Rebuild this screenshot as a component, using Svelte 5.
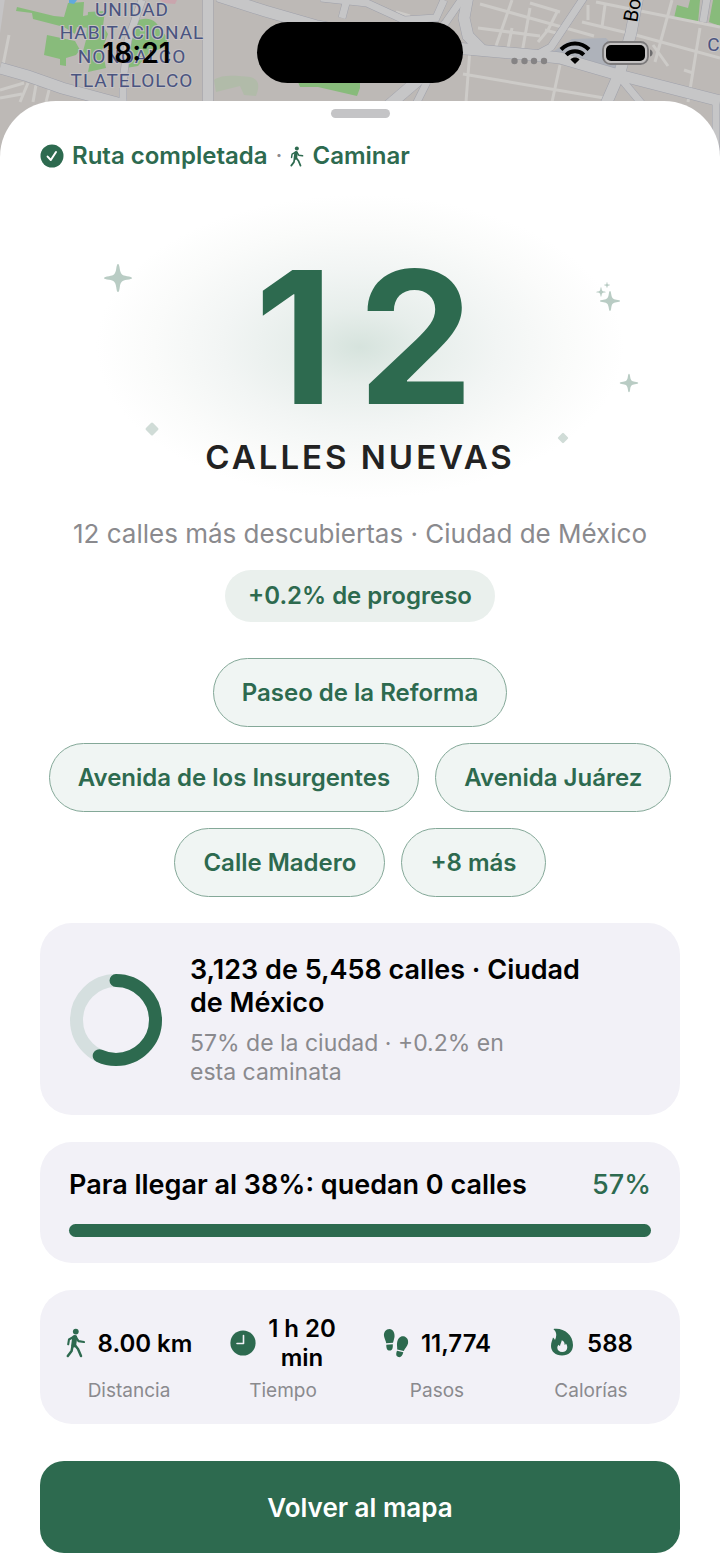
<script lang="ts">
	const streets = ['Paseo de la Reforma', 'Avenida de los Insurgentes', 'Avenida Juárez', 'Calle Madero'];
	const moreStreets = 8;

	const cityPercent = 57;
	const goalProgress = 100;

	const stats = [
		{ icon: 'walk', value: '8.00\u00a0km', label: 'Distancia' },
		{ icon: 'clock', value: '1\u00a0h\u00a020 min', label: 'Tiempo' },
		{ icon: 'steps', value: '11,774', label: 'Pasos' },
		{ icon: 'flame', value: '588', label: 'Calorías' }
	];

	const mainRoads = [
		'M0 68L28 76L62 88L125 105',
		'M218 -4L265 11L317 26L400 42L466 49L532 55L560 58L615 74L720 101',
		'M468 -4L464 18L468 36L482 50',
		'M638 -4L631 33L620 72L606 104',
		'M430 70L388 106'
	];

	const sideRoads = [
		'M123 105V82L128 40L142 0',
		'M321 -2L367 3L404 20L436 18L444 0',
		'M346 3L342 18',
		'M464 -4L446 22L430 40',
		'M585 -4L551 47L534 56',
		'M427 82L416 104',
		'M622 80L642 104',
		'M707 -2L703 22',
		'M716 95V170'
	];

	const star = 'M0 -14C1 -14 1.4 -12 1.8 -9C2.6 -4 4 -2.6 9 -1.8C12 -1.4 14 -1 14 0C14 1 12 1.4 9 1.8C4 2.6 2.6 4 1.8 9C1.4 12 1 14 0 14C-1 14 -1.4 12 -1.8 9C-2.6 4 -4 2.6 -9 1.8C-12 1.4 -14 1 -14 0C-14 -1 -12 -1.4 -9 -1.8C-4 -2.6 -2.6 -4 -1.8 -9C-1.4 -12 -1 -14 0 -14Z';
</script>

{#snippet walkIcon()}
	<svg class="walk" viewBox="0 0 20 30" aria-hidden="true">
		<circle cx="9.8" cy="3.6" r="2.9" fill="currentColor" />
		<g fill="none" stroke="currentColor" stroke-linecap="round" stroke-linejoin="round">
			<path d="M8.7 9.5L7.7 17" stroke-width="5" />
			<path d="M7.4 9L3 11.5L2.2 16.3" stroke-width="2.1" />
			<path d="M10 9.2L12.5 13.1L18 14" stroke-width="2.1" />
			<path d="M9 17.2L12 21L15 28" stroke-width="2.5" />
			<path d="M6.5 18L5.6 23L1.8 28" stroke-width="2.5" />
		</g>
	</svg>
{/snippet}

<main class="screen">
	<header class="map">
		<svg class="map-art" viewBox="0 0 720 170" preserveAspectRatio="xMidYMin slice" aria-hidden="true">
			<rect width="720" height="170" fill="#bdb9b6" />
			<g fill="#88bb7b">
				<path d="M17 7L54 16L64 17L68 3L84 2L83 16L94 14L91 28L77 27L75 34L64 27L33 19L32 13L16 11Z" />
				<path d="M47 35L75 41L80 50L76 55L66 58V66L60 65V59L44 55Z" />
				<path d="M88 12L105 11L103 26L108 34L102 50L106 68L88 72L90 62L82 55L86 40Z" />
				<path d="M128 38L135 22C148 14 160 22 160 32C168 33 170 44 162 48L148 54L138 66L126 68Z" />
				<path d="M298 82H360V88L357 96L318 87L300 87Z" />
				<path d="M674 18L677 5L688 8L690 0H700L698 23L687 21ZM713 0H720V26L709 22Z" />
			</g>
			<path d="M214 80C222 74 238 76 250 77C262 80 258 90 256 96L244 95L240 86L216 92Z" fill="#b1bba9" />
			<path d="M548 55L572 39L606 38L618 50L616 72L562 58Z" fill="#aeb2ba" />
			<path d="M69 0H77L74 4L69 3Z" fill="#61aadd" />
			<path d="M160 0H177L175 4L164 3Z" fill="#c9a5ad" />
			<g fill="none" stroke="#cdcbc8" stroke-width="3">
				<path d="M9 35L3 65M0 90L24 83M28 83L20 102M36 85L33 102M50 86L46 102M0 98L22 94" />
				<path d="M396 12L410 16M480 4L594 36M478 28L540 36M512 0L496 46M530 8L522 53M512 28L508 48M558 10L548 30L538 42M545 30L560 34M588 5V20M605 5L602 27M530 3L560 12M596 2L720 27M582 22L632 34M632 34L720 58M672 0L655 62M668 66L653 45M700 28L688 102M470 49L466 102M560 65L552 102M463 74L610 99M684 70L693 73" />
			</g>
			<path d="M2 -2L-4 40" stroke="#c5c4c5" stroke-width="6" />
			<g fill="none" stroke="#9fa1ab">
				{#each mainRoads as d}
					<path {d} stroke-width="12" />
				{/each}
				{#each sideRoads as d}
					<path {d} stroke-width="8" />
				{/each}
				<path d="M208 -2V105" stroke-width="11" />
			</g>
			<g fill="none" stroke="#c6c6c7">
				{#each mainRoads as d}
					<path {d} stroke-width="11" />
				{/each}
				{#each sideRoads as d}
					<path {d} stroke-width="7" />
				{/each}
				<path d="M208 -2V105" stroke-width="10" />
			</g>
			<g class="map-label" fill="#4a5480">
				<text x="132" y="16">UNIDAD</text>
				<text x="132" y="39">HABITACIONAL</text>
				<text x="132" y="63">NONOALCO</text>
				<text x="132" y="87">TLATELOLCO</text>
				<text x="714" y="51">C</text>
			</g>
			<text class="road-label" transform="translate(637 23) rotate(-80)">Bo</text>
		</svg>

		<div class="status">
			<time>18:21</time>
			<div class="island"></div>
			<div class="indicators">
				<svg class="signal" viewBox="0 0 37 24" fill="#858384" aria-hidden="true">
					<circle cx="3.5" cy="20" r="3.2" />
					<circle cx="13.5" cy="20" r="3.2" />
					<circle cx="23" cy="20" r="3.2" />
					<circle cx="33" cy="20" r="3.2" />
				</svg>
				<svg class="wifi" viewBox="0 0 32 24" aria-hidden="true">
					<g fill="none" stroke="#000" stroke-width="4">
						<path d="M2 8.5C10 .5 22 .5 30 8.5" />
						<path d="M7.2 13.8C12 9 20 9 24.8 13.8" />
					</g>
					<path d="M16 23L11.4 18.4C14 16 18 16 20.6 18.4Z" />
				</svg>
				<svg class="battery" viewBox="0 0 51 24" aria-hidden="true">
					<rect x="1" y="1" width="45" height="22" rx="7.5" fill="#c3c1c1" stroke="#7c7a7b" stroke-width="1.8" />
					<rect x="4" y="4" width="39" height="16" rx="5" />
					<path d="M48 8.5C51.5 9.5 51.5 14.5 48 15.5Z" fill="#6e6d6e" />
				</svg>
			</div>
		</div>
	</header>

	<section class="sheet">
		<div class="handle"></div>

		<div class="route">
			<svg class="check" viewBox="0 0 24 24" aria-hidden="true">
				<circle cx="12" cy="12" r="11.5" fill="currentColor" />
				<path d="M7.6 12.6L10.8 16L16 8" fill="none" stroke="#fff" stroke-width="2" stroke-linecap="round" stroke-linejoin="round" />
			</svg>
			<span>Ruta completada</span>
			<span class="dot">·</span>
			{@render walkIcon()}
			<span>Caminar</span>
		</div>

		<div class="hero">
			<svg class="sparkles" viewBox="0 0 640 340" aria-hidden="true">
				<g fill="#b9ccc4">
					<path d={star} transform="translate(78 107)" />
					<path d={star} transform="translate(570 130) scale(.72)" />
					<path d={star} transform="translate(561 121) scale(.34)" />
					<path d={star} transform="translate(567 114) scale(.22)" />
					<path d={star} transform="translate(589 212) scale(.66)" />
				</g>
				<g fill="#d0dcd7">
					<rect x="-5" y="-5" width="10" height="10" rx="1.5" transform="translate(112 258) rotate(45)" />
					<rect x="-4" y="-4" width="8" height="8" rx="1.2" transform="translate(523 267) rotate(45)" />
				</g>
			</svg>
			<div class="count">12</div>
			<h1>CALLES NUEVAS</h1>
		</div>

		<p class="summary">12 calles más descubiertas · Ciudad de México</p>
		<div class="badge">+0.2% de progreso</div>

		<ul class="streets">
			{#each streets as street}
				<li>{street}</li>
			{/each}
			<li>+{moreStreets} más</li>
		</ul>

		<div class="cards">
			<article class="card city">
				<svg class="ring" viewBox="0 0 92 92" aria-hidden="true">
					<circle cx="46" cy="46" r="39.5" fill="none" stroke="#d5dfdf" stroke-width="13" />
					<circle
						cx="46"
						cy="46"
						r="39.5"
						fill="none"
						stroke="#2d6a4f"
						stroke-width="13"
						stroke-linecap="round"
						pathLength="100"
						stroke-dasharray="{cityPercent} 100"
						transform="rotate(-90 46 46)"
					/>
				</svg>
				<div class="city-text">
					<h2>3,123 de 5,458 calles · Ciudad de México</h2>
					<p>{cityPercent}% de la ciudad · +0.2% en esta&nbsp;caminata</p>
				</div>
			</article>

			<article class="card goal">
				<div class="goal-row">
					<h2 id="goal-title">Para llegar al 38%: quedan 0 calles</h2>
					<span>{cityPercent}%</span>
				</div>
				<div class="track" role="progressbar" aria-labelledby="goal-title" aria-valuenow={goalProgress}>
					<div class="fill" style="width: {goalProgress}%"></div>
				</div>
			</article>

			<ul class="card stats">
				{#each stats as stat}
					<li class="stat">
						<div class="stat-value">
							{#if stat.icon === 'walk'}
								{@render walkIcon()}
							{:else if stat.icon === 'clock'}
								<svg class="icon" viewBox="0 0 26 26" aria-hidden="true">
									<circle cx="13" cy="13" r="12.6" fill="currentColor" />
									<path d="M13.5 5.5V13.5H7" fill="none" stroke="#f2f1f7" stroke-width="1.6" stroke-linecap="round" stroke-linejoin="round" />
								</svg>
							{:else if stat.icon === 'steps'}
								<svg class="icon" viewBox="0 0 26 30" fill="currentColor" aria-hidden="true">
									<path d="M6.5 1C10 1 12 5 11.5 9C11.2 11 10.4 13 10 14.8L3.2 15.2C3 13 1.3 10.5 1 8C.6 4 3 1 6.5 1Z" />
									<path d="M3.3 16.7L9.8 16.3C10 20 9.5 22.5 6.8 22.6C4 22.7 3.2 20 3.3 16.7Z" />
									<path d="M20.5 8.2C24 8.8 25.7 12 25 15.5C24.4 18.5 21.6 20.5 20.8 23L14.2 21.4C14.4 19 13.6 17 14.2 14C14.9 10.5 17.3 7.7 20.5 8.2Z" />
									<path d="M14 22.8L20.3 24.3C19.5 27.5 18 29.8 15.3 29C12.8 28.3 12.9 25.5 14 22.8Z" />
								</svg>
							{:else}
								<svg class="icon" viewBox="0 0 24 30" aria-hidden="true">
									<path d="M4.2 .8C13 -.5 23 6 23 17C23 23.5 18.5 27.5 12 27.5C5.5 27.5 1 23.5 1 18C1 14.5 2.3 12.5 3 9.5C4 10.3 4.7 11 5 12C6.7 8.5 7 4.5 3.8 1.6C3.4 1.2 3.6 .9 4.2 .8Z" fill="currentColor" />
									<path d="M11.8 12.2C14.6 13.5 14.6 15.5 14.7 17C15.5 16.6 15.7 16 15.8 15.5C17 17 17.4 18.4 17.2 20C16.8 22.5 15 24 12.2 24C9.4 24 7.3 22.4 7.3 19.8C7.3 18.5 7.8 17.6 8.5 16.7C9 17.5 9.3 17.8 10 18C10.3 15.8 11.4 14.6 11.8 12.2Z" fill="#f2f1f7" />
								</svg>
							{/if}
							<strong>{stat.value}</strong>
						</div>
						<span class="stat-label">{stat.label}</span>
					</li>
				{/each}
			</ul>
		</div>

		<button type="button">Volver al mapa</button>
	</section>
</main>

<style>
	:global(body) {
		background: #bdb9b6;
	}

	.screen {
		position: relative;
		font-family: Inter, 'Liberation Sans', sans-serif;
		color: #000;
	}

	h1, h2, p, ul {
		margin: 0;
		padding: 0;
	}

	ul {
		list-style: none;
	}

	.map {
		height: 101px;
	}

	.map-art {
		position: absolute;
		top: 0;
		left: 0;
		width: 100%;
		height: 170px;
	}

	.map-label {
		font-family: Roboto, sans-serif;
		font-size: 19px;
		letter-spacing: 1px;
		text-anchor: middle;
		paint-order: stroke;
		stroke: #c6c3c4;
		stroke-width: 2px;
	}

	.road-label {
		font-family: Roboto, sans-serif;
		font-size: 20px;
	}

	.status {
		position: relative;
		display: grid;
		grid-template-columns: 1fr 206px 1fr;
		align-items: center;
		padding-top: 22px;
	}

	.status time {
		padding-left: 16px;
		text-align: center;
		font-size: 28px;
		font-weight: 600;
	}

	.island {
		height: 61px;
		border-radius: 31px;
		background: #000;
	}

	.indicators {
		display: flex;
		align-items: center;
		gap: 11px;
		padding-left: 48px;
	}

	.indicators svg {
		height: 24px;
	}

	.signal {
		width: 37px;
	}

	.wifi {
		width: 32px;
	}

	.battery {
		width: 51px;
	}

	.sheet {
		position: relative;
		display: flex;
		flex-direction: column;
		padding: 8px 40px 12px;
		border-radius: 56px 56px 0 0;
		background: #fff;
	}

	.handle {
		align-self: center;
		width: 59px;
		height: 9px;
		border-radius: 5px;
		background: #c4c4c6;
	}

	.route {
		display: flex;
		align-items: center;
		gap: 8px;
		margin-top: 23px;
		font-size: 24px;
		line-height: 30px;
		font-weight: 600;
		color: #2d6a4f;
	}

	.check {
		width: 24px;
		height: 24px;
	}

	.walk {
		flex: none;
		width: 20px;
		height: 30px;
	}

	.route .walk {
		width: 14px;
		height: 21px;
	}

	.route .dot {
		font-weight: 400;
		color: #8a8a8e;
	}

	.hero {
		position: relative;
		padding: 74px 0 39px;
		text-align: center;
		background: radial-gradient(ellipse 264px 152px at 50% 51%, #d6e3dd 0%, #e7eeeb 25%, #f2f5f4 52%, #fafbfa 78%, #fff 100%);
	}

	.sparkles {
		position: absolute;
		top: 0;
		left: 0;
		width: 100%;
	}

	.count {
		position: relative;
		font-size: 184px;
		line-height: 184px;
		font-weight: 700;
		letter-spacing: 24px;
		text-indent: 32px;
		color: #2d6a4f;
	}

	h1 {
		position: relative;
		font-size: 33px;
		margin-top: 8px;
		line-height: 40px;
		font-weight: 600;
		letter-spacing: 3px;
		color: #222;
	}

	.summary {
		text-align: center;
		font-size: 26px;
		line-height: 36px;
		color: #8a8a8e;
	}

	.badge {
		align-self: center;
		margin-top: 18px;
		padding: 0 23px;
		border-radius: 26px;
		background: #eaf0ed;
		font-size: 24px;
		line-height: 52px;
		font-weight: 600;
		color: #2d6a4f;
	}

	.streets {
		display: flex;
		flex-wrap: wrap;
		justify-content: center;
		gap: 16px;
		margin-top: 36px;
	}

	.streets li {
		padding: 0 28px;
		border: 1px solid #84a898;
		border-radius: 35px;
		background: #f0f5f3;
		font-size: 24px;
		line-height: 67px;
		font-weight: 600;
		color: #2d6a4f;
	}

	.cards {
		display: flex;
		flex-direction: column;
		gap: 27px;
		margin-top: 26px;
	}

	.card {
		border-radius: 32px;
		background: #f2f1f7;
	}

	.card h2 {
		font-size: 27px;
		line-height: 33px;
		font-weight: 600;
	}

	.city {
		display: flex;
		align-items: center;
		gap: 28px;
		padding: 30px 30px 28px;
	}

	.ring {
		flex: none;
		width: 92px;
		height: 92px;
	}

	.city-text {
		max-width: 420px;
	}

	.city-text p {
		margin-top: 10px;
		font-size: 23px;
		line-height: 29px;
		color: #8a8a8e;
	}

	.goal {
		padding: 26px 29px;
	}

	.goal-row {
		display: flex;
		justify-content: space-between;
		align-items: center;
		font-size: 27px;
		line-height: 33px;
		font-weight: 500;
		color: #2d6a4f;
	}

	.goal h2 {
		color: #000;
	}

	.track {
		height: 13px;
		margin-top: 23px;
		border-radius: 7px;
		background: #d5dfdf;
	}

	.fill {
		height: 100%;
		border-radius: 7px;
		background: #2d6a4f;
	}

	.stats {
		display: grid;
		grid-template-columns: repeat(4, 1fr);
		padding: 24px 12px 20px;
	}

	.stat {
		display: flex;
		flex-direction: column;
		align-items: center;
		gap: 6px;
	}

	.stat-value {
		display: flex;
		flex: 1;
		align-items: center;
		gap: 12px;
		color: #2d6a4f;
	}

	.stat-value strong {
		width: min-content;
		text-align: center;
		font-size: 24px;
		line-height: 29px;
		font-weight: 600;
		color: #000;
	}

	.stat-label {
		font-size: 19px;
		line-height: 26px;
		color: #8a8a8e;
	}

	.icon {
		flex: none;
		width: 26px;
		height: 30px;
	}

	button {
		height: 92px;
		margin-top: 37px;
		border: 0;
		border-radius: 24px;
		background: #2d6a4f;
		font: inherit;
		font-size: 26px;
		font-weight: 600;
		color: #fff;
	}
</style>
